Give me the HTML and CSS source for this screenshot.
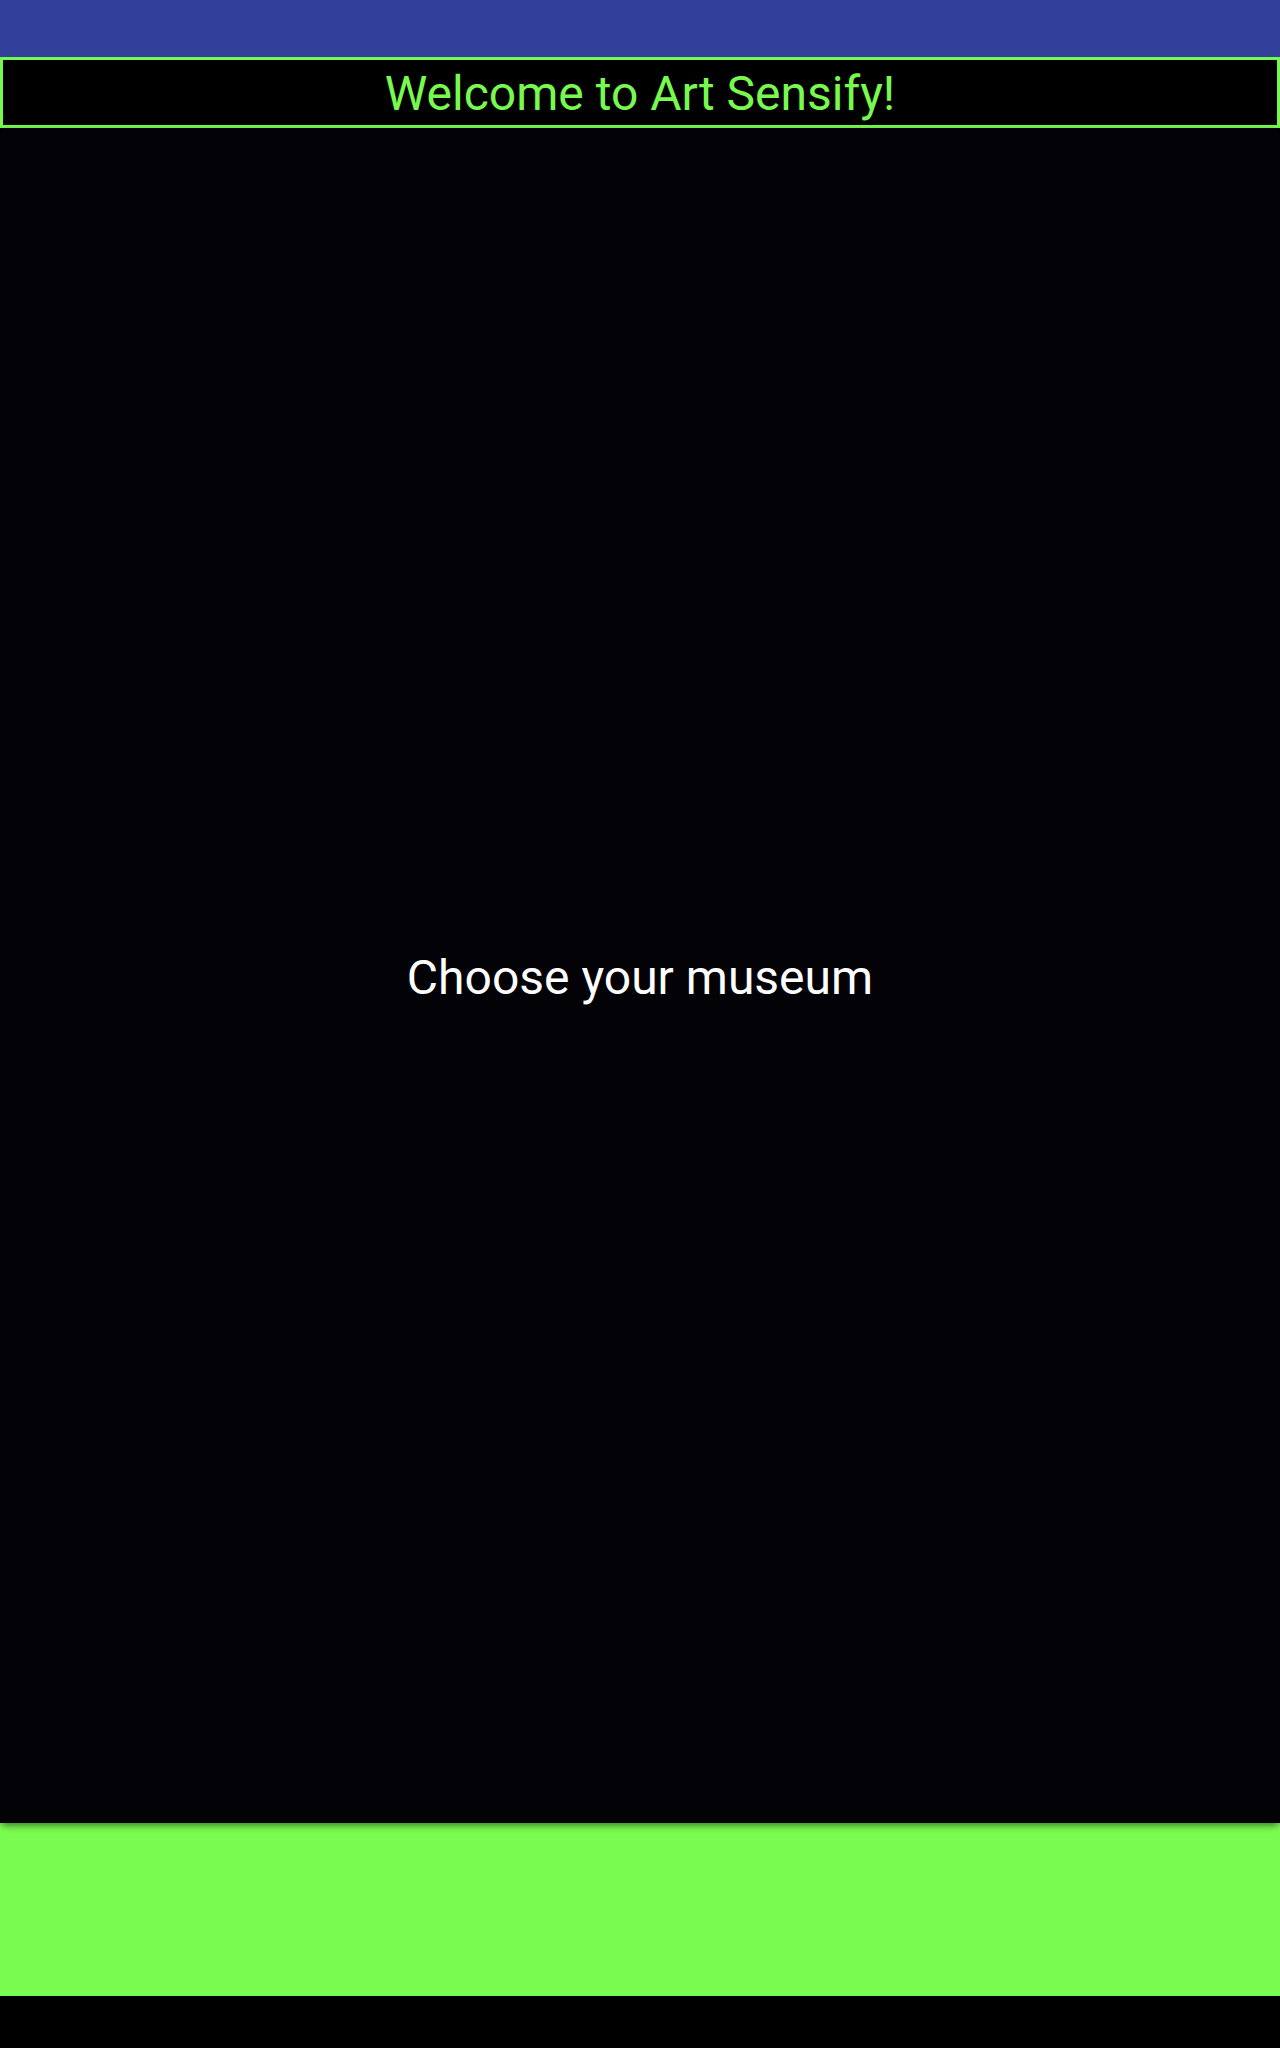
FILE: index.html
```html
<!DOCTYPE html>
<html>
<head>
<meta charset="utf-8">
<link rel="stylesheet" href="styles.css">
</head>
<body>
<div class="screen">
  <div class="statusbar"></div>
  <div class="header">Welcome to Art Sensify!</div>
  <div class="card">
    <div class="card-text">Choose your museum</div>
  </div>
  <div class="footer"></div>
  <div class="navbar"></div>
</div>
</body>
</html>
```
FILE: styles.css
```css
html, body {
  margin: 0;
  padding: 0;
  background: #000000;
}
.screen {
  width: 1280px;
  height: 2048px;
  display: flex;
  flex-direction: column;
  font-family: Roboto, "Noto Sans", sans-serif;
}
.statusbar {
  height: 57px;
  background: #32409a;
}
.header {
  height: 71px;
  box-sizing: border-box;
  border: 3px solid #76f94e;
  background: #000000;
  color: #78f950;
  font-size: 48px;
  display: flex;
  align-items: center;
  justify-content: center;
  padding-top: 2px;
}
.card {
  height: 1695px;
  background: #030206;
  border-radius: 6px;
  box-shadow: 0 3px 6px rgba(0,0,0,0.45);
  display: flex;
  align-items: center;
  justify-content: center;
  position: relative;
  z-index: 1;
}
.card-text {
  color: #ffffff;
  font-size: 48px;
  padding-top: 4px;
}
.footer {
  height: 173px;
  background: #79fb4f;
}
.navbar {
  flex: 1;
  background: #000000;
}
```
